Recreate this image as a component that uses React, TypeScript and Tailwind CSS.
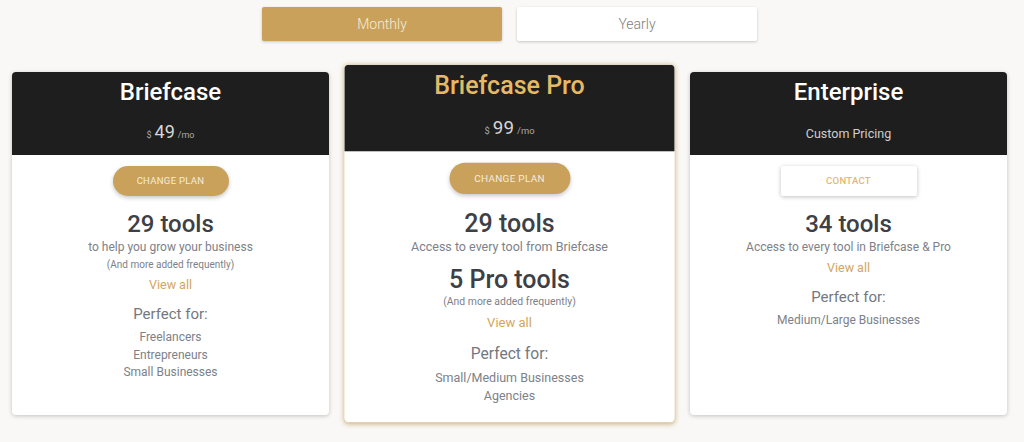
import React from "react";

const font = { fontFamily: "Roboto, 'Liberation Sans', sans-serif" };

function Header({ title, gold, children }: { title: string; gold?: boolean; children: React.ReactNode }) {
  return (
    <div className="h-[83px] bg-[#1e1e1e] pt-[6px] text-center">
      <div className={`text-[24px] leading-[28px] font-medium ${gold ? "text-[#e6ba64]" : "text-white"}`}>{title}</div>
      {children}
    </div>
  );
}

function Price({ amount }: { amount: string }) {
  return (
    <div className="mt-[14px] flex items-baseline justify-center leading-[24px]">
      <span className="text-[9px] text-[#a9a9a9] mr-[3px]">$</span>
      <span className="text-[18px] text-[#d6d6d6]">{amount}</span>
      <span className="text-[9px] text-[#a9a9a9] ml-[3px]">/mo</span>
    </div>
  );
}

function GoldButton() {
  return (
    <div className="mx-auto mt-[11px] flex h-[30px] w-[116px] items-center justify-center rounded-full bg-[#c9a15b] text-[9.5px] tracking-[0.3px] text-[#f7ecd8] shadow-[0_2px_4px_rgba(0,0,0,0.22)]">
      CHANGE PLAN
    </div>
  );
}

function Big({ children, className = "" }: { children: React.ReactNode; className?: string }) {
  return <div className={`text-[24px] leading-[30px] font-medium text-[#3d4045] ${className}`}>{children}</div>;
}

function Sub({ children }: { children: React.ReactNode }) {
  return <div className="text-[12px] leading-[16px] text-[#7d8188]">{children}</div>;
}

function Small({ children, className = "" }: { children: React.ReactNode; className?: string }) {
  return <div className={`text-[10px] leading-[14px] text-[#7d8188] ${className}`}>{children}</div>;
}

function ViewAll({ className = "mt-[5px]" }: { className?: string }) {
  return <div className={`${className} text-[12.5px] leading-[16px] text-[#d2a65c]`}>View all</div>;
}

function Perfect({ items }: { items: string[] }) {
  return (
    <>
      <div className="mt-[11px] text-[15px] leading-[20px] text-[#74787f]">Perfect for:</div>
      <div className="mt-[5px]">
        {items.map((i) => (
          <div key={i} className="text-[12px] leading-[17.5px] text-[#7d8188]">{i}</div>
        ))}
      </div>
    </>
  );
}

export default function App() {
  return (
    <div className="h-[442px] w-[1024px] overflow-hidden bg-[#f9f8f6]" style={font}>
      <div className="flex justify-center gap-[15px] pt-[7px] pr-[5px]">
        <div className="flex h-[34px] w-[240px] items-center justify-center rounded-[2px] bg-[#c9a15b] text-[14px] font-light text-[#f6ecd9] shadow-[0_1px_3px_rgba(0,0,0,0.2)]">
          Monthly
        </div>
        <div className="flex h-[34px] w-[240px] items-center justify-center rounded-[2px] bg-white text-[14px] font-light text-[#7d7d7d] shadow-[0_1px_3px_rgba(0,0,0,0.2)]">
          Yearly
        </div>
      </div>

      <div className="mt-[31px] flex gap-[22px] pl-[12px]">
        <div className="h-[343px] w-[317px] overflow-hidden rounded-[4px] bg-white text-center shadow-[0_1px_4px_rgba(0,0,0,0.22)]">
          <Header title="Briefcase">
            <Price amount="49" />
          </Header>
          <GoldButton />
          <Big className="mt-[13px]">29 tools</Big>
          <Sub>to help you grow your business</Sub>
          <Small className="mt-[3px]">(And more added frequently)</Small>
          <ViewAll />
          <Perfect items={["Freelancers", "Entrepreneurs", "Small Businesses"]} />
        </div>

        <div className="h-[343px] w-[317px] scale-[1.042] overflow-hidden rounded-[4px] bg-white text-center shadow-[0_1px_5px_rgba(190,150,80,0.75)]">
          <Header title="Briefcase Pro" gold>
            <Price amount="99" />
          </Header>
          <GoldButton />
          <Big className="mt-[13px]">29 tools</Big>
          <Sub>Access to every tool from Briefcase</Sub>
          <Big className="mt-[8px]">5 Pro tools</Big>
          <Small>(And more added frequently)</Small>
          <ViewAll />
          <Perfect items={["Small/Medium Businesses", "Agencies"]} />
        </div>

        <div className="h-[343px] w-[317px] overflow-hidden rounded-[4px] bg-white text-center shadow-[0_1px_4px_rgba(0,0,0,0.22)]">
          <Header title="Enterprise">
            <div className="mt-[18px] text-[12.5px] leading-[20px] text-[#cfcfcf]">Custom Pricing</div>
          </Header>
          <div className="mx-auto mt-[11px] flex h-[30px] w-[136px] items-center justify-center rounded-[2px] bg-white text-[9.5px] font-medium tracking-[0.3px] text-[#dfb877] shadow-[0_1px_4px_rgba(0,0,0,0.25)]">
            CONTACT
          </div>
          <Big className="mt-[13px]">34 tools</Big>
          <Sub>Access to every tool in Briefcase &amp; Pro</Sub>
          <ViewAll />
          <Perfect items={["Medium/Large Businesses"]} />
        </div>
      </div>
    </div>
  );
}
